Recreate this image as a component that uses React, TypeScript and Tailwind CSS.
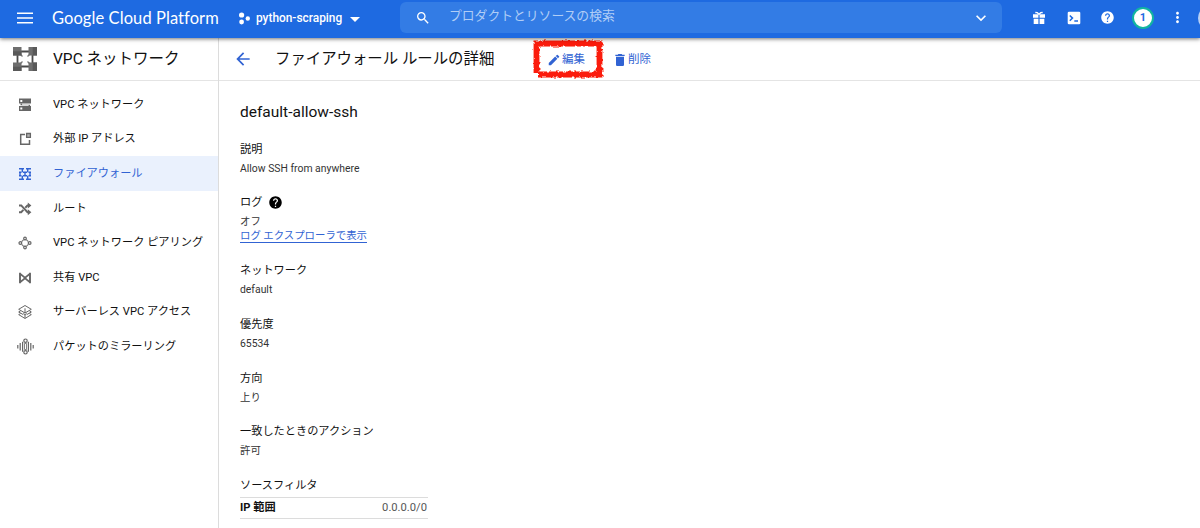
import type { ReactNode } from "react";
import { MdArrowBack, MdDelete, MdEdit, MdExpandMore, MdHelp, MdMoreVert, MdSearch } from "react-icons/md";

const NAV_ITEMS = [
  { label: "VPC ネットワーク", icon: <NetworkIcon /> },
  { label: "外部 IP アドレス", icon: <ExternalIpIcon /> },
  { label: "ファイアウォール", icon: <FirewallIcon />, active: true },
  { label: "ルート", icon: <RouteIcon /> },
  { label: "VPC ネットワーク ピアリング", icon: <PeeringIcon /> },
  { label: "共有 VPC", icon: <SharedVpcIcon /> },
  { label: "サーバーレス VPC アクセス", icon: <ServerlessIcon /> },
  { label: "パケットのミラーリング", icon: <MirroringIcon /> },
];

function NetworkIcon() {
  return (
    <svg className="size-4" viewBox="0 0 16 16" fill="currentColor">
      <path fillRule="evenodd" d="M2 1.500h12v5H2zM3.300 3v2h2V3z" />
      <path fillRule="evenodd" d="M2 9h12v5H2zM3.300 10.500v2h2v-2z" />
      <path d="M3.500 6.500h1.600v1.200h8V9h-1.500V8.200H3.500z" />
    </svg>
  );
}

function ExternalIpIcon() {
  return (
    <svg className="size-4" viewBox="0 0 16 16" fill="none" stroke="currentColor">
      <path strokeWidth="1.500" d="M8 3.500H3.700v9.800h8.800V9" />
      <path strokeWidth="1.300" d="M9.600 2.500h3.800v3.800H9.600z" fill="currentColor" fillOpacity=".5" />
    </svg>
  );
}

function FirewallIcon() {
  return (
    <svg className="size-4" viewBox="0 0 16 16" fill="none" stroke="currentColor" strokeWidth="1.400">
      <path d="M2 2.700h5M9 2.700h5M2 6.200h2.500M6 6.200h4M11.500 6.200H14M2 9.800h2.500M6 9.800h4M11.500 9.800H14M2 13.300h5M9 13.300h5" />
      <path d="M5.300 2.700v3.500M10.700 2.700v3.500M3 6.200v3.600M8 6.200v3.600M13 6.200v3.600M5.300 9.800v3.500M10.700 9.800v3.500" />
    </svg>
  );
}

function RouteIcon() {
  return (
    <svg className="size-4" viewBox="0 0 16 16" fill="none" stroke="currentColor" strokeWidth="2">
      <path d="M2 4.400h2.200l6.300 6.800H12M2 11.200h2.200l2.200-2.300M8.300 6.700l2.200-2.300H12" />
      <path d="M10.800 1.400l3.600 3-3.600 3zM10.800 8.200l3.600 3-3.600 3z" fill="currentColor" stroke="none" />
    </svg>
  );
}

function PeeringIcon() {
  return (
    <svg className="size-4" viewBox="0 0 16 16" fill="none" stroke="currentColor">
      <circle cx="8" cy="8" r="3.500" strokeWidth="1" />
      <g fill="white" strokeWidth="1.200">
        <circle cx="8" cy="3.500" r="1.300" />
        <circle cx="8" cy="12.500" r="1.300" />
        <circle cx="3.300" cy="8" r="1.300" />
        <circle cx="12.700" cy="8" r="1.300" />
      </g>
    </svg>
  );
}

function SharedVpcIcon() {
  return (
    <svg className="size-4" viewBox="0 0 16 16" fill="none" stroke="currentColor">
      <path strokeWidth="1.900" d="M3 2.700v10.600M13 2.700v10.600" />
      <path strokeWidth="1.700" d="M3.300 4l4 3.200v1.600l-4 3.200M12.700 4l-4 3.200v1.600l4 3.200M6.500 8h3" />
    </svg>
  );
}

function ServerlessIcon() {
  return (
    <svg className="size-4" viewBox="0 0 16 16" fill="none" stroke="currentColor" strokeWidth="1">
      <path d="M8 1.500L14.300 5.300 8 9 1.700 5.300zM3.500 7L1.700 8l4.500 2.600M12.500 7l1.800 1-4.500 2.600M3.500 9.600l-1.800 1L8 14.500l6.300-3.900-1.800-1" />
      <path d="M8 4.300V8M8 11v3" />
      <circle cx="8" cy="9.600" r="1.200" fill="white" />
    </svg>
  );
}

function MirroringIcon() {
  return (
    <svg className="size-[17px]" viewBox="0 0 17 17" fill="none" stroke="currentColor" strokeWidth="1.200">
      <path d="M.8 7v3.500M3.200 5v7.500M5.600 3.800v9.900M11.400 3.800v9.900M13.800 5v7.500M16.200 7v3.500" />
      <path d="M7.500 5.500h2v6h-2z" strokeWidth=".8" />
      <circle cx="8.500" cy="2.700" r="1.700" />
      <circle cx="8.500" cy="14.300" r="1.700" />
    </svg>
  );
}

function VpcLogo() {
  return (
    <svg className="size-[26px]" viewBox="0 0 26 26">
      <path d="M9 5.500h8M9 20.500h8M5.500 9v8M20.500 9v8" fill="none" stroke="#4a4a4a" strokeWidth="1.800" />
      <path d="M8.500 8.500l2 2M17.500 8.500l-2 2M8.500 17.500l2-2M17.500 17.500l-2-2" stroke="#777" strokeWidth="1.300" />
      <path d="M1 1h8.500v8.500H1zM16.500 1H25v8.500h-8.500zM1 16.500h8.500V25H1zM16.500 16.500H25V25h-8.500z" fill="#6e6e6e" />
      <path d="M1 5.200h8.500v4.300H1zM20.700 1H25v8.500h-4.300zM1 20.700h8.500V25H1zM20.700 16.500H25V25h-4.300z" fill="#595959" />
    </svg>
  );
}

function GiftIcon() {
  return (
    <svg className="size-[14px]" viewBox="0 0 14 14" fill="white">
      <path d="M1 3.300h5.400v3.500H1zM7.600 3.300H13v3.500H7.600zM1.700 7.800h4.700V13H1.700zM7.600 7.800h4.700V13H7.600z" />
      <path d="M3.300 1.500l2 .2L7 3.300l1.700-1.600 2-.2" fill="none" stroke="white" strokeWidth="1.300" />
    </svg>
  );
}

function ShellIcon() {
  return (
    <svg className="size-[14px]" viewBox="0 0 14 14">
      <rect x=".7" y=".7" width="12.600" height="12.600" rx="1.300" fill="white" />
      <path d="M2.800 4.500l2.700 2.600-2.700 2.600M7.300 10h3.700" fill="none" stroke="#1e6ae1" strokeWidth="1.500" />
    </svg>
  );
}

// hand drawn marker box around the edit action
function MarkerFrame() {
  return (
    <svg className="absolute -left-[15px] -top-[1px] h-[44px] w-[76px]" viewBox="0 0 76 44">
      <filter id="rough" x="-10%" y="-10%" width="120%" height="120%">
        <feTurbulence type="fractalNoise" baseFrequency="0.32" numOctaves="2" seed="11" />
        <feDisplacementMap in="SourceGraphic" scale="4" xChannelSelector="R" yChannelSelector="G" />
      </filter>
      <path
        d="M3.500 6.500h68M68.500 4v35.500M71.500 37.500H8M5.500 6v30"
        fill="none"
        stroke="#fb1d08"
        strokeWidth="5.800"
        filter="url(#rough)"
      />
    </svg>
  );
}

function Field({ label, children }: { label: string; children: ReactNode }) {
  return (
    <div className="mb-[14.75px]">
      <dt className="h-5 leading-[22px]">{label}</dt>
      <dd className="h-[19px] text-[10.400px] leading-[19px] text-[#333]">{children}</dd>
    </div>
  );
}

export default function App() {
  return (
    <div className="flex h-[528px] w-[1200px] flex-col overflow-hidden bg-white font-['Roboto','Noto_Sans_CJK_JP',sans-serif] text-[11.200px] text-[#111]">
      <header className="relative z-10 flex h-[38px] shrink-0 items-start bg-[#1e6ae1] text-white shadow-[0_1px_4px_rgba(0,0,0,0.55)]">
        <div className="flex h-[35px] w-[400px] shrink-0 items-center pl-[17px]">
          <svg className="h-3 w-4" viewBox="0 0 16 12" stroke="white" strokeWidth="1.500">
            <path d="M0 1.300h16M0 6h16M0 10.700h16" />
          </svg>
          <span className="ml-[19px] w-[186px] whitespace-nowrap pt-px font-['Lato',sans-serif] text-[16.500px] tracking-[0.08px]">
            Google Cloud Platform
          </span>
          <svg className="mt-0.5 size-[13px]" viewBox="0 0 13 13" fill="white">
            <circle cx="3.600" cy="3" r="2.600" />
            <circle cx="9.800" cy="6.500" r="2.200" />
            <circle cx="3.600" cy="10" r="2.400" />
          </svg>
          <span className="ml-[5px] mt-[3px] w-[94px] whitespace-nowrap text-[11.900px] font-medium">
            python-scraping
          </span>
          <svg className="mt-[3px] h-[5px] w-[10px]" viewBox="0 0 10 5" fill="white">
            <path d="M0 0h10L5 5z" />
          </svg>
        </div>
        <div className="mt-0.5 flex h-[31px] w-[602px] shrink-0 items-center rounded-[6px] bg-[#337ce5] pl-[15px] pr-[11px]">
          <MdSearch className="size-4" />
          <span className="ml-[18px] flex-1 pb-[3px] text-[12.800px] text-[#b0cdf6]">プロダクトとリソースの検索</span>
          <MdExpandMore className="size-[20px]" />
        </div>
        <div className="flex h-[35px] flex-1 items-center overflow-hidden pl-[28px]">
          <div className="flex w-[35px] shrink-0 pl-0.5">
            <GiftIcon />
          </div>
          <div className="flex w-[35px] shrink-0 pl-0.5">
            <ShellIcon />
          </div>
          <MdHelp className="size-[15px] shrink-0" />
          <span className="ml-[17px] flex size-[22px] shrink-0 items-center justify-center rounded-full border-2 border-[#12b5a0] bg-white pt-px text-[11px] font-bold text-[#1e6ae1]">
            1
          </span>
          <MdMoreVert className="ml-[15px] size-[17px] shrink-0" />
          <span className="ml-3 size-6 shrink-0 rounded-full bg-[#b8d0f5]" />
        </div>
      </header>

      <div className="flex flex-1">
        <aside className="flex w-[219px] shrink-0 flex-col border-r border-[#dcdcdc]">
          <div className="flex h-[43px] items-center border-b border-[#e4e4e4] pl-3">
            <VpcLogo />
            <h2 className="ml-[15px] pt-0.5 text-[15.500px]">VPC ネットワーク</h2>
          </div>
          <nav className="pt-[6px]">
            {NAV_ITEMS.map((item) => (
              <div
                key={item.label}
                className={`flex h-[34.600px] items-center ${item.active ? "bg-[#eaf1fd] text-[#3163d3]" : "text-[#111]"}`}
              >
                <span className={`flex w-[53px] shrink-0 pl-[17px] pt-px ${item.active ? "" : "text-[#666]"}`}>
                  {item.icon}
                </span>
                <span className="whitespace-nowrap pt-0.5">{item.label}</span>
              </div>
            ))}
          </nav>
        </aside>

        <main className="flex-1">
          <div className="flex h-[43px] items-center border-b border-[#e4e4e4] pl-[14px] text-[#3163d3]">
            <MdArrowBack className="size-[20px]" />
            <h1 className="ml-[22px] w-[271px] shrink-0 whitespace-nowrap pt-0.5 text-[15.400px] text-[#111]">
              ファイアウォール ルールの詳細
            </h1>
            <div className="relative flex h-[42px] w-[67px] items-center pl-px">
              <MarkerFrame />
              <MdEdit className="mt-0.5 size-[14px]" />
              <span className="ml-px pt-px text-[11.500px]">編集</span>
            </div>
            <MdDelete className="ml-[-1px] mt-px size-[16px]" />
            <span className="pt-px text-[11.500px]">削除</span>
          </div>

          <section className="pl-[21px] pt-[21px]">
            <h3 className="mb-[17px] h-5 text-[15.500px] leading-5">default-allow-ssh</h3>
            <dl>
              <Field label="説明">Allow SSH from anywhere</Field>
              <div className="mb-[16.250px]">
                <dt className="flex h-5 items-center leading-[22px]">
                  ログ
                  <MdHelp className="ml-[6px] size-[15px] text-black" />
                </dt>
                <dd className="h-[17px] text-[10.400px] leading-[17px] text-[#333]">オフ</dd>
                <dd className="flex h-[14px]">
                  <a className="h-[13px] border-b border-[#3163d3] text-[10.400px] leading-[12px] text-[#3163d3]">
                    ログ エクスプローラで表示
                  </a>
                </dd>
              </div>
              <Field label="ネットワーク">default</Field>
              <Field label="優先度">65534</Field>
              <Field label="方向">上り</Field>
              <Field label="一致したときのアクション">許可</Field>
              <dt className="h-5 leading-[22px]">ソースフィルタ</dt>
            </dl>
            <div className="mt-[2px] flex h-[22px] w-[188px] items-center justify-between border-y border-[#dcdcdc]">
              <span className="font-bold">IP 範囲</span>
              <span className="pr-px text-[#555]">0.0.0.0/0</span>
            </div>
          </section>
        </main>
      </div>
    </div>
  );
}
